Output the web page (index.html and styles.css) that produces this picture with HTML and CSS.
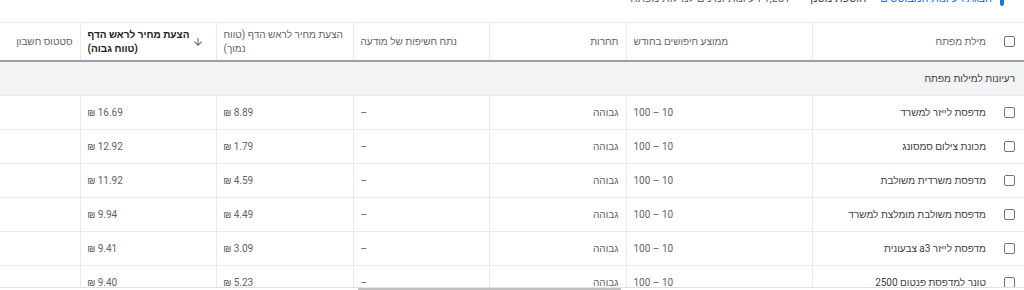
FILE: index.html
```html
<!DOCTYPE html>
<html lang="he" dir="rtl">
<head>
<meta charset="utf-8">
<title>רעיונות למילות מפתח</title>
<link rel="stylesheet" href="styles.css">
</head>
<body>
<div class="toolbar">
  <div class="toolbar-row">
    <span class="tb-bar"></span>
    <span class="tb-link">הצגת רעיונות המבוססים</span>
    <span class="tb-filter">הוספת מסנן</span>
    <span class="tb-count">1,281 רעיונות זמינים למילות מפתח</span>
  </div>
</div>
<table class="grid">
  <colgroup>
    <col class="c-kw"><col class="c-avg"><col class="c-comp"><col class="c-share"><col class="c-low"><col class="c-high"><col class="c-status">
  </colgroup>
  <thead>
    <tr class="head">
      <th class="kw"><div class="kw-wrap"><span class="cb"></span><span>מילת מפתח</span></div></th>
      <th class="num">ממוצע חיפושים בחודש</th>
      <th class="txt">תחרות</th>
      <th class="num">נתח חשיפות של מודעה</th>
      <th class="num">הצעת מחיר לראש הדף (טווח<br>נמוך)</th>
      <th class="num sorted"><div class="sort-wrap"><svg class="arrow" viewBox="0 0 24 24" width="12" height="12" aria-hidden="true"><path d="M20 12l-1.41-1.41L13 16.17V4h-2v12.17l-5.58-5.59L4 12l8 8 8-8z"/></svg><span class="sort-label">הצעת מחיר לראש הדף<br>(טווח גבוה)</span></div></th>
      <th class="txt">סטטוס חשבון</th>
    </tr>
  </thead>
  <tbody>
    <tr class="group"><td colspan="7">רעיונות למילות מפתח</td></tr>
    <tr>
      <td class="kw"><div class="kw-wrap"><span class="cb"></span><span>מדפסת לייזר למשרד</span></div></td>
      <td class="num">10 – 100</td><td class="txt">גבוהה</td><td class="num">–</td>
      <td class="num"><span dir="ltr">₪ 8.89</span></td><td class="num"><span dir="ltr">₪ 16.69</span></td><td class="txt"></td>
    </tr>
    <tr>
      <td class="kw"><div class="kw-wrap"><span class="cb"></span><span>מכונת צילום סמסונג</span></div></td>
      <td class="num">10 – 100</td><td class="txt">גבוהה</td><td class="num">–</td>
      <td class="num"><span dir="ltr">₪ 1.79</span></td><td class="num"><span dir="ltr">₪ 12.92</span></td><td class="txt"></td>
    </tr>
    <tr>
      <td class="kw"><div class="kw-wrap"><span class="cb"></span><span>מדפסת משרדית משולבת</span></div></td>
      <td class="num">10 – 100</td><td class="txt">גבוהה</td><td class="num">–</td>
      <td class="num"><span dir="ltr">₪ 4.59</span></td><td class="num"><span dir="ltr">₪ 11.92</span></td><td class="txt"></td>
    </tr>
    <tr>
      <td class="kw"><div class="kw-wrap"><span class="cb"></span><span>מדפסת משולבת מומלצת למשרד</span></div></td>
      <td class="num">10 – 100</td><td class="txt">גבוהה</td><td class="num">–</td>
      <td class="num"><span dir="ltr">₪ 4.49</span></td><td class="num"><span dir="ltr">₪ 9.94</span></td><td class="txt"></td>
    </tr>
    <tr>
      <td class="kw"><div class="kw-wrap"><span class="cb"></span><span>מדפסת לייזר a3 צבעונית</span></div></td>
      <td class="num">10 – 100</td><td class="txt">גבוהה</td><td class="num">–</td>
      <td class="num"><span dir="ltr">₪ 3.09</span></td><td class="num"><span dir="ltr">₪ 9.41</span></td><td class="txt"></td>
    </tr>
    <tr>
      <td class="kw"><div class="kw-wrap"><span class="cb"></span><span>טונר למדפסת פנטום 2500</span></div></td>
      <td class="num">10 – 100</td><td class="txt">גבוהה</td><td class="num">–</td>
      <td class="num"><span dir="ltr">₪ 5.23</span></td><td class="num"><span dir="ltr">₪ 9.40</span></td><td class="txt"></td>
    </tr>
  </tbody>
</table>
<div class="hscroll"><div class="hscroll-thumb"></div></div>
</body>
</html>
```

FILE: styles.css
```css
html, body {
  margin: 0;
  padding: 0;
  background: #ffffff;
}
body {
  font-family: Roboto, "Liberation Sans", Arial, sans-serif;
  font-size: 10px;
  color: #3c4043;
  overflow: hidden;
}

.toolbar {
  height: 22px;
  overflow: hidden;
}
.toolbar-row {
  display: flex;
  align-items: flex-end;
  height: 14px;
  margin-top: -8px;
  line-height: 14px;
  font-size: 11px;
  padding-right: 20px;
}
.tb-bar {
  width: 4px;
  height: 14px;
  background: #1a73e8;
  border-radius: 2px;
  margin-left: 8px;
}
.tb-link {
  color: #1a73e8;
  margin-left: 14px;
}
.tb-filter {
  color: #3c4043;
  margin-left: 20px;
}
.tb-count {
  color: #5f6368;
}

.grid {
  width: 1024px;
  border-collapse: collapse;
  table-layout: fixed;
}
.c-kw { width: 212px; }
.c-avg { width: 186px; }
.c-comp { width: 137px; }
.c-share { width: 136px; }
.c-low { width: 137px; }
.c-high { width: 136px; }
.c-status { width: 80px; }

.grid th, .grid td {
  padding: 0 7px;
  border-left: 1px solid #e8eaed;
  vertical-align: middle;
  white-space: nowrap;
  overflow: hidden;
}
.grid th:last-child, .grid td:last-child {
  border-left: none;
}

.head th {
  height: 37px;
  border-top: 1px solid #e8eaed;
  border-bottom: 2px solid #9aa0a6;
  font-weight: 400;
  color: #5f6368;
  line-height: 14px;
}
.grid .num { text-align: left; }
.grid .txt { text-align: right; }
.grid td.num { color: #5f6368; }
.grid td.txt { color: #5f6368; }

.kw-wrap {
  display: flex;
  align-items: center;
  gap: 18px;
}
.grid .kw { padding-right: 9px; }
.cb {
  flex: none;
  width: 9px;
  height: 9px;
  border: 1.5px solid #70757a;
  border-radius: 2px;
}

.sort-wrap {
  display: flex;
  align-items: center;
  justify-content: space-between;
}
.arrow {
  flex: none;
  fill: #5f6368;
  margin-right: 5px;
}
.sort-label {
  font-weight: 700;
  color: #202124;
  text-align: left;
}

.group td {
  height: 33px;
  background: #f1f3f4;
  border-bottom: 1px solid #e8eaed;
  padding-right: 9px;
  color: #3c4043;
}

tbody tr:not(.group) td {
  height: 33px;
  border-bottom: 1px solid #e8eaed;
}
tbody td.kw { color: #3c4043; }

.hscroll {
  position: fixed;
  left: 0;
  right: 0;
  bottom: 0;
  height: 2px;
  border-top: 1px solid #e0e0e0;
  background: #ffffff;
}
.hscroll-thumb {
  position: absolute;
  left: 358px;
  width: 263px;
  top: 0;
  height: 2px;
  background: #c1c1c1;
}
```
